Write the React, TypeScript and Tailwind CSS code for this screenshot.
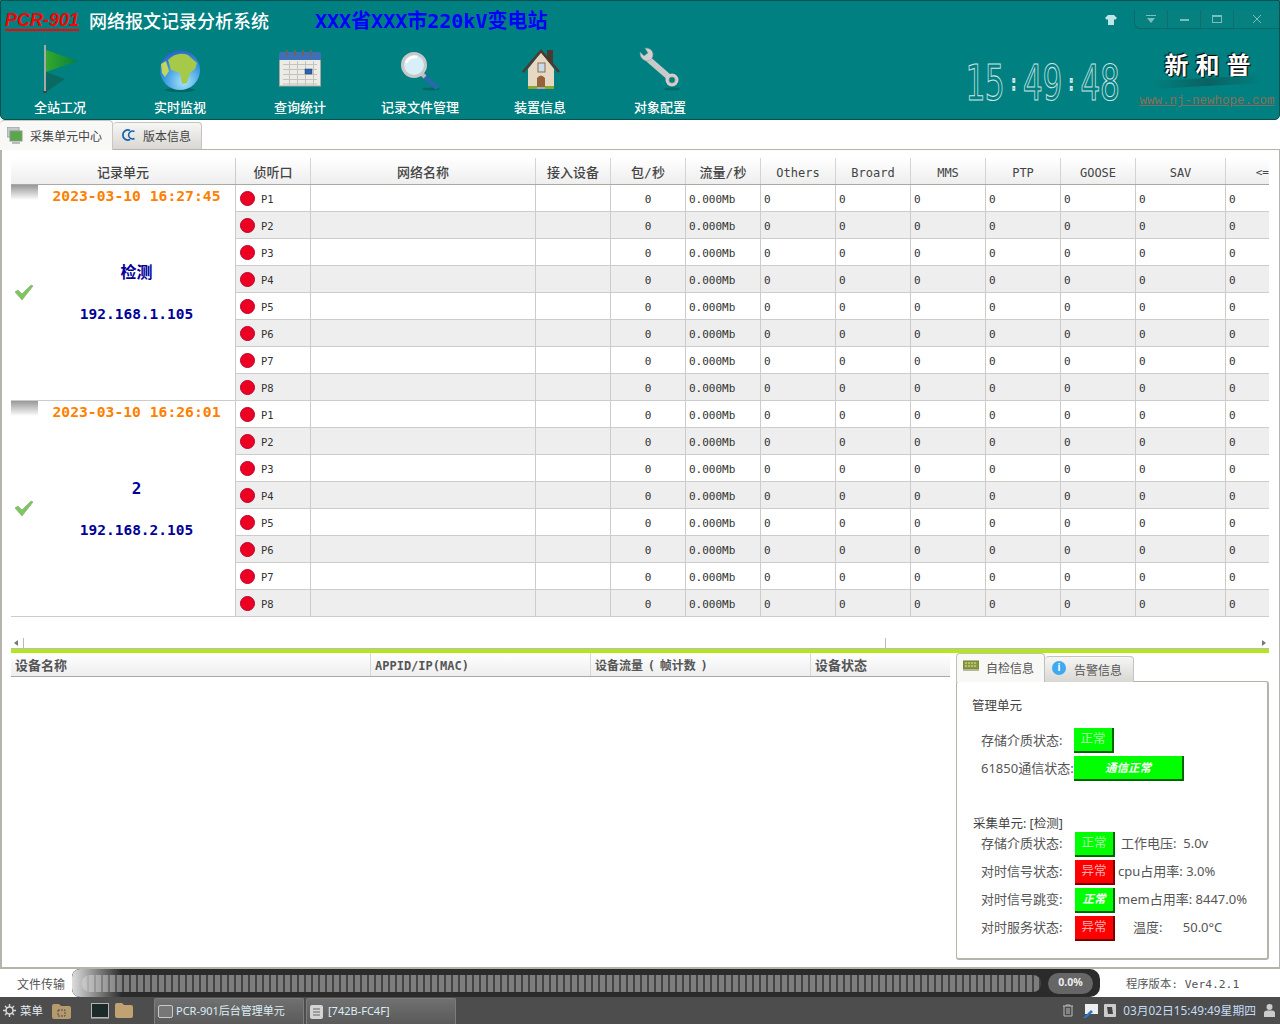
import React from 'react';

const sans = "font-['Noto_Sans','Noto_Sans_CJK_SC',sans-serif]";
const mono = "font-['DejaVu_Sans_Mono','Noto_Sans_CJK_SC',monospace]";

const columns = [
  { title: '侦听口', w: 'w-[75px]', size: 'text-[13px]' },
  { title: '网络名称', w: 'w-[225px]', size: 'text-[13px]' },
  { title: '接入设备', w: 'w-[75px]', size: 'text-[13px]' },
  { title: '包/秒', w: 'w-[75px]', size: 'text-[13px]' },
  { title: '流量/秒', w: 'w-[75px]', size: 'text-[13px]' },
  { title: 'Others', w: 'w-[75px]', size: 'text-[12px]' },
  { title: 'Broard', w: 'w-[75px]', size: 'text-[12px]' },
  { title: 'MMS', w: 'w-[75px]', size: 'text-[12px]' },
  { title: 'PTP', w: 'w-[75px]', size: 'text-[12px]' },
  { title: 'GOOSE', w: 'w-[75px]', size: 'text-[12px]' },
  { title: 'SAV', w: 'w-[90px]', size: 'text-[12px]' },
];

const ports = ['P1', 'P2', 'P3', 'P4', 'P5', 'P6', 'P7', 'P8'];

const units = [
  { time: '2023-03-10 16:27:45', name: '检测', ip: '192.168.1.105' },
  { time: '2023-03-10 16:26:01', name: '2', ip: '192.168.2.105' },
];

const toolbar = [
  { label: '全站工况', icon: <FlagIcon /> },
  { label: '实时监视', icon: <GlobeIcon /> },
  { label: '查询统计', icon: <CalendarIcon /> },
  { label: '记录文件管理', icon: <SearchIcon /> },
  { label: '装置信息', icon: <HouseIcon /> },
  { label: '对象配置', icon: <WrenchIcon /> },
];

function FlagIcon() {
  return (
    <svg width="50" height="52" viewBox="0 0 50 52">
      <defs>
        <linearGradient id="flag" x1="0" y1="0" x2="1" y2="0">
          <stop offset="0" stopColor="#35a82e" />
          <stop offset="1" stopColor="#07803a" />
        </linearGradient>
      </defs>
      <path d="M11 49 L30 36 L11 29 Z" fill="#0a6a62" />
      <path d="M11 7 L43 18 L11 29 Z" fill="url(#flag)" />
      <rect x="9" y="2" width="2" height="47" fill="#a8a8a8" />
      <rect x="8" y="48" width="4" height="2" fill="#444" />
    </svg>
  );
}

function GlobeIcon() {
  return (
    <svg width="50" height="52" viewBox="0 0 50 52">
      <defs>
        <radialGradient id="sea" cx="0.6" cy="0.8" r="0.8">
          <stop offset="0" stopColor="#a8e6fb" />
          <stop offset="0.6" stopColor="#3e9be2" />
          <stop offset="1" stopColor="#2368bd" />
        </radialGradient>
      </defs>
      <ellipse cx="25" cy="47" rx="15" ry="2" fill="#066" />
      <circle cx="25" cy="27" r="20" fill="url(#sea)" />
      <path d="M13 17 Q22 8 33 12 L42 20 L40 26 L35 30 L32 40 L27 41 L25 30 L16 27 Z" fill="#a7c94a" />
      <path d="M6 21 L11 18 L14 28 L10 34 L7 30 Z" fill="#c4d65a" />
    </svg>
  );
}

function CalendarIcon() {
  return (
    <svg width="50" height="52" viewBox="0 0 50 52">
      <rect x="4.5" y="12" width="41" height="31" fill="#ecebe6" stroke="#a8a8a0" />
      <path d="M4 17 V11 Q4 9 6 9 H44 Q46 9 46 11 V17 Z" fill="#3f6fb5" />
      <path d="M12 7V13M20 7V13M28 7V13M36 7V13" stroke="#666" strokeWidth="2" />
      <path d="M8 21.5H42M8 26.5H42M8 31.5H42M8 36.5H42M8 41H42M14.5 18V42M22.5 18V42M30.5 18V42M38.5 18V42" stroke="#c4c4bc" />
      <rect x="30" y="26" width="7" height="5" fill="#2d63ad" stroke="#1c3f77" strokeWidth="0.5" />
    </svg>
  );
}

function SearchIcon() {
  return (
    <svg width="50" height="52" viewBox="0 0 50 52">
      <ellipse cx="36" cy="46" rx="9" ry="1.5" fill="#066" />
      <path d="M28 32 L41 44" stroke="#2a68ae" strokeWidth="4.5" strokeLinecap="round" />
      <path d="M26 30 L30 34" stroke="#bbb" strokeWidth="4" />
      <circle cx="19" cy="22" r="11.5" fill="#d8eef9" stroke="#c8c8c8" strokeWidth="3" />
      <path d="M11 20 Q14 13 22 14" stroke="#fff" strokeWidth="2.5" fill="none" />
    </svg>
  );
}

function HouseIcon() {
  return (
    <svg width="50" height="52" viewBox="0 0 50 52">
      <rect x="32" y="7" width="6" height="14" fill="#4b3a30" />
      <path d="M13 26 L26 9 L39 26 V44 H13 Z" fill="#e7d8c4" />
      <path d="M8 29 L26 8 L44 29" fill="none" stroke="#4b3a30" strokeWidth="2.5" />
      <rect x="23" y="20" width="7" height="9" fill="#c8dcec" stroke="#8f6d50" />
      <path d="M22 45 V35 Q26 30 30 35 V45 Z" fill="#96623a" />
      <rect x="13" y="43" width="9" height="3" fill="#8ea52e" />
      <rect x="30" y="43" width="9" height="3" fill="#8ea52e" />
      <rect x="22" y="44" width="8" height="2" fill="#aaa" />
    </svg>
  );
}

function WrenchIcon() {
  return (
    <svg width="50" height="52" viewBox="0 0 50 52">
      <ellipse cx="37" cy="46" rx="8" ry="1.5" fill="#066" />
      <path d="M12 15 L35 35" stroke="#c9c9c9" strokeWidth="6" />
      <path d="M5 9 L9 13 L13 10 L10 5 Q17 5 18 11 Q18 17 12 18 Q5 17 5 9 Z" fill="#d0d0d0" stroke="#999" strokeWidth="0.5" />
      <circle cx="37" cy="37" r="6.5" fill="#cfcfcf" />
      <circle cx="37" cy="37" r="3" fill="#008080" stroke="#888" />
    </svg>
  );
}

function CheckIcon() {
  return (
    <svg width="20" height="17" viewBox="0 0 20 17">
      <path d="M1 8 L4 6 L8 10 L17 1 L19 2 L8 16 Z" fill="#7cc858" stroke="#8fa88a" strokeWidth="0.7" />
    </svg>
  );
}

function Dot() {
  return <span className="w-[15px] h-[15px] rounded-full bg-[#ee0022] border border-[#b8002a] shrink-0" />;
}

function Cell({ w, children, className }: { w: string; children?: React.ReactNode; className?: string }) {
  return <div className={`${w} shrink-0 h-full flex items-center border-r border-[#cccccc] ${className ?? ''}`}>{children}</div>;
}

function PortRow({ port, even }: { port: string; even: boolean }) {
  return (
    <div className={`h-[27px] flex border-b border-[#cccccc] text-[11px] text-[#333] ${mono} ${even ? 'bg-[#eeeeee]' : 'bg-white'}`}>
      <Cell w="w-[75px]" className="pl-[4px] gap-[6px]">
        <Dot />
        <span className="text-[10.5px] mt-[3px]">{port}</span>
      </Cell>
      <Cell w="w-[225px]" />
      <Cell w="w-[75px]" />
      <Cell w="w-[75px]" className="justify-center pt-[4px]">0</Cell>
      <Cell w="w-[75px]" className="pl-[3px] pt-[4px]">0.000Mb</Cell>
      <Cell w="w-[75px]" className="pl-[3px] pt-[4px]">0</Cell>
      <Cell w="w-[75px]" className="pl-[3px] pt-[4px]">0</Cell>
      <Cell w="w-[75px]" className="pl-[3px] pt-[4px]">0</Cell>
      <Cell w="w-[75px]" className="pl-[3px] pt-[4px]">0</Cell>
      <Cell w="w-[75px]" className="pl-[3px] pt-[4px]">0</Cell>
      <Cell w="w-[90px]" className="pl-[3px] pt-[4px]">0</Cell>
      <div className="flex-1 pl-[3px] pt-[4px] flex items-center">0</div>
    </div>
  );
}

function UnitBlock({ time, name, ip }: { time: string; name: string; ip: string }) {
  return (
    <div className="flex">
      <div className="w-[225px] shrink-0 h-[216px] flex border-r border-b border-[#cccccc] bg-white">
        <div className="w-[27px] shrink-0 flex flex-col">
          <div className="h-[15px] bg-gradient-to-b from-[#999999] to-white" />
          <div className="flex-1 flex items-center justify-center pb-[16px] pr-[2px]">
            <CheckIcon />
          </div>
        </div>
        <div className={`flex-1 flex flex-col items-center font-bold ${mono}`}>
          <div className="h-[22px] leading-[21px] text-[14.7px] text-[#ff8000] whitespace-nowrap">{time}</div>
          <div className="mt-[56px] h-[20px] leading-[20px] text-[16px] text-[#000099]">{name}</div>
          <div className="mt-[21px] h-[20px] leading-[20px] text-[14.5px] text-[#000099]">{ip}</div>
        </div>
      </div>
      <div className="flex-1 min-w-0">
        {ports.map((port, i) => (
          <PortRow key={port} port={port} even={i % 2 === 1} />
        ))}
      </div>
    </div>
  );
}

function Clock() {
  return (
    <div className="w-[155px] h-[38px] flex items-center justify-between text-[33px] leading-none text-transparent [-webkit-text-stroke:0.7px_#d0e4e4] font-['DejaVu_Sans_Mono',monospace] scale-y-150">
      <span>15</span>
      <span className="text-[14px] [-webkit-text-stroke:1px_#e8f0f0]">:</span>
      <span>49</span>
      <span className="text-[14px] [-webkit-text-stroke:1px_#e8f0f0]">:</span>
      <span>48</span>
    </div>
  );
}

function WindowControls() {
  return (
    <div className="w-[145px] h-[19px] flex border border-r-0 border-t-0 border-[#0a6a6a] rounded-bl-[6px] bg-[#078080]">
      <div className="w-[33px] flex items-center justify-center border-r border-[#0f6e6e]">
        <svg width="10" height="8" viewBox="0 0 10 8"><path d="M0 0H10V1H0ZM1 3H9L5 8Z" fill="#7fbdbd" /></svg>
      </div>
      <div className="w-[33px] flex items-center justify-center border-r border-[#0f6e6e]">
        <span className="w-[9px] h-[2px] mt-[2px] bg-[#7fbdbd]" />
      </div>
      <div className="w-[33px] flex items-center justify-center border-r border-[#0f6e6e]">
        <span className="w-[10px] h-[8px] border border-t-2 border-[#7fbdbd]" />
      </div>
      <div className="flex-1 flex items-center justify-center">
        <svg width="10" height="10" viewBox="0 0 10 10"><path d="M1 1L9 9M9 1L1 9" stroke="#7fbdbd" /></svg>
      </div>
    </div>
  );
}

function Header() {
  return (
    <div className={`h-[120px] shrink-0 bg-[#008080] border border-[#0d4f4f] rounded-b-[5px] flex justify-between ${sans}`}>
      <div className="flex flex-col">
        <div className="h-[39px] flex items-center pl-[4px]">
          <span className="w-[84px] text-[18px] font-bold italic text-[#ff0000] font-['Liberation_Sans',sans-serif]">
            <span className="underline decoration-2 underline-offset-[3px]">PCR-901</span>
          </span>
          <span className="w-[226px] text-[18px] font-medium text-white font-['Noto_Sans_CJK_SC',sans-serif]">网络报文记录分析系统</span>
          <span className={`text-[20px] font-bold text-[#0000ff] ${mono}`}>XXX省XXX市220kV变电站</span>
        </div>
        <div className="flex -ml-[1px]">
          {toolbar.map((item) => (
            <div key={item.label} className="w-[120px] flex flex-col items-center">
              <div className="h-[52px] mt-[3px] flex items-center justify-center">{item.icon}</div>
              <span className="text-[13px] leading-[16px] mt-[4px] text-white font-medium font-['Noto_Sans_CJK_SC',sans-serif]">{item.label}</span>
            </div>
          ))}
        </div>
      </div>
      <div className="flex flex-col items-end">
        <div className="flex items-center mt-[9px]">
          <svg width="12" height="10" viewBox="0 0 12 10" className="mr-[17px]">
            <path d="M3 0H9L12 3L10 5L9 4V10H3V4L2 5L0 3Z" fill="#bfe6e6" />
          </svg>
          <WindowControls />
        </div>
        <div className="flex mt-[21px] items-start">
          <div className="mr-[17px] mt-[13px]">
            <Clock />
          </div>
          <div className="w-[140px] mr-[2px] flex flex-col items-center">
            <div className="text-[24px] leading-[28px] font-bold text-white tracking-[7px] pl-[8px] font-['Noto_Sans_CJK_SC',serif] [text-shadow:1px_1px_1px_#000,-1px_-1px_1px_#000]">
              新和普
            </div>
            <div className="h-[8px] w-[110px] bg-gradient-to-r from-[#008080] via-[#0a6262] to-[#008080] -skew-y-3" />
            <div className="mt-[7px] text-[12.5px] leading-[16px] whitespace-nowrap text-[#8a6f58] underline decoration-[#8a6a5c] font-['Liberation_Mono',monospace]">
              www.nj-newhope.com
            </div>
          </div>
        </div>
      </div>
    </div>
  );
}

function TopTabs() {
  return (
    <div className="h-[30px] shrink-0 flex items-end border-b border-[#b5b3ab] text-[12px] text-[#444] font-['Noto_Sans_CJK_SC',sans-serif]">
      <div className="w-[113px] h-[30px] flex items-center gap-[7px] pl-[7px] bg-[#f8f8f6] border-r border-t border-[#c8c8c0] rounded-t-[4px] relative top-[1px]">
        <svg width="16" height="18" viewBox="0 0 16 18">
          <rect x="0" y="0" width="12" height="10" fill="#c5c9cc" stroke="#9aa0a5" />
          <rect x="3" y="4" width="12" height="10" fill="#5aa64a" stroke="#8a9a8a" />
          <rect x="5" y="15" width="8" height="2" fill="#bbb" />
        </svg>
        <span>采集单元中心</span>
      </div>
      <div className="w-[89px] h-[27px] flex items-center gap-[7px] pl-[8px] bg-gradient-to-b from-[#f6f6f5] to-[#d8d7d3] border-r border-t border-[#c4c4bc] rounded-t-[4px]">
        <svg width="15" height="14" viewBox="0 0 15 14" className="mb-[3px]">
          <path d="M9 2.5A5 5 0 1 0 9 11.5" fill="none" stroke="#1a62a8" strokeWidth="1.8" />
          <path d="M13.5 3.5A4 4 0 1 0 13.5 10.5" fill="none" stroke="#1a62a8" strokeWidth="1.5" />
        </svg>
        <span>版本信息</span>
      </div>
    </div>
  );
}

function MainTable() {
  return (
    <div className="mt-[8px]">
      <div className={`h-[27px] flex bg-gradient-to-b from-white to-[#eeeeee] border-b border-[#aaaaa4] font-medium text-[#444] ${mono}`}>
        <div className="w-[225px] shrink-0 flex items-center justify-center pt-[4px] text-[13px] border-r border-[#cccccc]">记录单元</div>
        {columns.map((col) => (
          <div key={col.title} className={`${col.w} ${col.size} shrink-0 flex items-center justify-center pt-[4px] border-r border-[#d4d4d4]`}>
            {col.title}
          </div>
        ))}
        <div className="flex-1 flex items-center justify-end pt-[4px] text-[11px]">{'<='}</div>
      </div>
      {units.map((u) => (
        <UnitBlock key={u.time} {...u} />
      ))}
    </div>
  );
}

function HScroll() {
  return (
    <div className="mt-[21px] h-[11px] flex items-center justify-between border-b border-[#bbbbbb]">
      <div className="flex items-center h-full">
        <svg width="12" height="10" viewBox="0 0 12 10">
          <path d="M3 5L7 2V8Z" fill="#777" />
        </svg>
        <span className="w-[1px] h-full bg-[#bbbbbb]" />
      </div>
      <span className="w-[1px] h-full bg-[#bbbbbb] ml-[488px]" />
      <svg width="10" height="10" viewBox="0 0 10 10">
        <path d="M7 5L3 2V8Z" fill="#777" />
      </svg>
    </div>
  );
}

function DeviceTable() {
  const cols = [
    { t: '设备名称', w: 'w-[360px]', size: 'text-[13px]' },
    { t: 'APPID/IP(MAC)', w: 'w-[220px]', size: 'text-[12px]' },
    { t: '设备流量 ( 帧计数 )', w: 'w-[220px]', size: 'text-[12px] [word-spacing:-2.5px]' },
    { t: '设备状态', w: 'w-[139px]', size: 'text-[13px]' },
  ];
  return (
    <div className={`w-[939px] h-[24px] flex bg-gradient-to-b from-white to-[#eeeeee] border-b border-[#aaaaa4] font-bold text-[#555] ${mono}`}>
      {cols.map((c) => (
        <div key={c.t} className={`${c.w} ${c.size} flex items-center pl-[4px] pt-[3px] border-r border-[#d8d8d8] last:border-r-0`}>
          {c.t}
        </div>
      ))}
    </div>
  );
}

function StatusButton({ text, red, bold, w = 'w-[40px]' }: { text: string; red?: boolean; bold?: boolean; w?: string }) {
  const tone = red ? 'bg-[#ff0000] border-[#7a0000] text-[#ffb0b0]' : bold ? 'bg-[#00ff00] border-[#006600] text-white' : 'bg-[#00ff00] border-[#006600] text-[#a8ffa8]';
  return (
    <div
      className={`${w} h-[25px] shrink-0 flex items-center justify-center border-r-2 border-b-2 ${tone} ${bold ? 'font-bold italic text-[11.5px]' : 'text-[12.5px]'}`}
    >
      {text}
    </div>
  );
}

function StatusRow({ label, state, red, bold, note }: { label: string; state: string; red?: boolean; bold?: boolean; note: React.ReactNode }) {
  return (
    <div className="h-[28px] flex items-center pl-[24px]">
      <span className="w-[94px]">{label}</span>
      <StatusButton text={state} red={red} bold={bold} />
      {note}
    </div>
  );
}

function SidePanel() {
  return (
    <div className={`w-[313px] shrink-0 flex flex-col text-[13px] text-[#555] ${sans}`}>
      <div className="h-[28px] flex items-end relative top-[1px] z-10">
        <div className="w-[89px] h-[29px] flex items-center gap-[7px] pl-[6px] bg-[#f8f8f6] border border-b-0 border-[#c0c0b8] rounded-t-[4px]">
          <svg width="16" height="12" viewBox="0 0 16 12" className="mb-[4px]">
            <rect x="0" y="1" width="16" height="8" fill="#8a9a3a" stroke="#6f7f30" />
            <path d="M2 3H14M2 6H14" stroke="#dfe5a8" strokeDasharray="2 1" />
            <rect x="0" y="9" width="16" height="2" fill="#b7b7a0" />
          </svg>
          <span className="font-['Noto_Sans_CJK_SC',sans-serif] text-[12px]">自检信息</span>
        </div>
        <div className="w-[89px] h-[26px] flex items-center gap-[8px] pl-[7px] bg-gradient-to-b from-[#f6f6f5] to-[#d8d7d3] border-r border-t border-[#c4c4bc] rounded-t-[4px]">
          <span className="w-[14px] h-[14px] rounded-full bg-[#3fa9f0] text-white text-[10px] font-bold flex items-center justify-center mb-[4px]">i</span>
          <span className="font-['Noto_Sans_CJK_SC',sans-serif] text-[12px]">告警信息</span>
        </div>
      </div>
      <div className="h-[279px] border border-[#b5b3ab] rounded-[3px] bg-white border-b-2 border-r-2 pl-[15px] pt-[14px] flex flex-col">
        <div className="h-[20px] leading-[20px] text-[12.5px] text-[#444]">管理单元</div>
        <div className="mt-[12px] -ml-[15px] flex flex-col gap-[3px]">
          <div className="h-[25px] flex items-center pl-[24px]">
            <span className="w-[93px]">存储介质状态:</span>
            <StatusButton text="正常" />
          </div>
          <div className="h-[25px] flex items-center pl-[24px]">
            <span className="w-[93px] whitespace-nowrap">61850通信状态:</span>
            <StatusButton text="通信正常" bold w="w-[110px]" />
          </div>
        </div>
        <div className="mt-[33px] h-[20px] leading-[20px] text-[12.5px] text-[#444] pl-[1px]">采集单元: [检测]</div>
        <div className="-ml-[15px] mt-[-4px]">
          <StatusRow label="存储介质状态:" state="正常" note={<span className="ml-[6px]">工作电压:&nbsp;&nbsp;5.0v</span>} />
          <StatusRow label="对时信号状态:" state="异常" red note={<span className="ml-[3px]">cpu占用率: 3.0%</span>} />
          <StatusRow label="对时信号跳变:" state="正常" bold note={<span className="ml-[3px]">mem占用率: 8447.0%</span>} />
          <StatusRow label="对时服务状态:" state="异常" red note={<span className="ml-[18px]">温度:&nbsp;&nbsp;&nbsp;&nbsp;&nbsp;&nbsp;50.0°C</span>} />
        </div>
      </div>
    </div>
  );
}

function TransferBar() {
  return (
    <div className={`h-[28px] shrink-0 flex items-center text-[12px] text-[#555] ${sans}`}>
      <span className="w-[72px] pl-[17px] pt-[2px] font-['Noto_Sans_CJK_SC',sans-serif]">文件传输</span>
      <div className="w-[1028px] h-full bg-[#2b2b2b] rounded-l-[8px] rounded-r-[10px] flex items-center relative overflow-hidden">
        <div className="ml-[10px] w-[959px] h-[17px] rounded-[8px] bg-[repeating-linear-gradient(90deg,#7d7d7d_0px,#7d7d7d_5px,#444444_5px,#444444_7px)]" />
        <div className="absolute left-0 top-0 w-[50px] h-full bg-gradient-to-r from-[#dddddd] to-transparent rounded-l-[8px]" />
        <div className="ml-[7px] w-[45px] h-[21px] rounded-full bg-[#666666] text-[#eeeeee] text-[10.5px] font-bold flex items-center justify-center">0.0%</div>
      </div>
      <span className={`ml-[26px] pt-[4px] text-[11.3px] text-[#555] ${mono}`}>程序版本: Ver4.2.1</span>
    </div>
  );
}

function TaskButton({ icon, label, w }: { icon: React.ReactNode; label: string; w: string }) {
  return (
    <div className={`${w} h-[26px] flex items-center gap-[3px] pl-[3px] bg-gradient-to-b from-[#707070] to-[#5a5a5a] border border-[#7c7c7c] border-b-0 rounded-t-[2px] text-[#dceef5] text-[11px]`}>
      {icon}
      <span>{label}</span>
    </div>
  );
}

function Taskbar() {
  return (
    <div className={`h-[27px] shrink-0 bg-[#4d4d4d] flex items-end justify-between text-[11.5px] text-[#e4eef4] ${sans}`}>
      <div className="flex items-end h-full">
        <div className="h-full flex items-center pl-[3px] gap-[4px] w-[52px]">
          <svg width="13" height="13" viewBox="0 0 13 13">
            <circle cx="6.5" cy="6.5" r="3.5" fill="none" stroke="#d8d8d8" strokeWidth="1.6" />
            <path d="M6.5 0V3M6.5 10V13M0 6.5H3M10 6.5H13M2 2L4 4M9 9L11 11M11 2L9 4M4 9L2 11" stroke="#d8d8d8" strokeWidth="1.4" />
          </svg>
          <span>菜单</span>
        </div>
        <div className="h-full flex items-center w-[38px]">
          <svg width="19" height="16" viewBox="0 0 19 16">
            <path d="M0 3Q0 1 2 1H7L9 3H17Q19 3 19 5V14Q19 16 17 16H2Q0 16 0 14Z" fill="#b59a6e" />
            <rect x="6" y="7" width="7" height="6" fill="none" stroke="#4d4d4d" strokeDasharray="2 1" />
          </svg>
        </div>
        <div className="h-full flex items-center gap-[6px] ml-[1px] w-[63px]">
          <span className="w-[18px] h-[15px] bg-[#1d2a2a] border border-[#b4b4b4] shadow-[0_1px_0_#888]" />
          <svg width="18" height="15" viewBox="0 0 18 15">
            <path d="M0 2Q0 0 2 0H7L9 2H16Q18 2 18 4V13Q18 15 16 15H2Q0 15 0 13Z" fill="#c0a273" />
          </svg>
        </div>
        <div className="flex items-end gap-[2px] h-full">
          <TaskButton
            w="w-[150px]"
            label="PCR-901后台管理单元"
            icon={<span className="w-[15px] h-[13px] border border-[#c8c8c8] rounded-[2px] bg-[#777]" />}
          />
          <TaskButton
            w="w-[150px]"
            label="[742B-FC4F]"
            icon={
              <svg width="13" height="14" viewBox="0 0 13 14" className="mr-[2px]">
                <rect width="13" height="14" rx="2" fill="#d4d4d4" />
                <path d="M3 4H10M3 7H10M3 10H10" stroke="#666" />
              </svg>
            }
          />
        </div>
      </div>
      <div className="flex items-center h-full">
        <svg width="12" height="13" viewBox="0 0 12 13" className="mr-[9px]">
          <path d="M1 2H11M4 2V1H8V2M2 2V12H10V2M5 4V10M7 4V10" fill="none" stroke="#bbbbbb" />
        </svg>
        <svg width="15" height="14" viewBox="0 0 15 14" className="mr-[6px]">
          <rect x="2" y="0" width="13" height="10" fill="#eeeeee" />
          <path d="M0 14L8 6L10 8L3 14Z" fill="#2a78c8" />
        </svg>
        <svg width="12" height="13" viewBox="0 0 12 13" className="mr-[7px]">
          <rect width="12" height="13" rx="1" fill="#cccccc" />
          <path d="M3 3H8L9 10H4Z" fill="#444" />
        </svg>
        <span className="text-[11.8px] text-[#c4dcf4] whitespace-nowrap">03月02日15:49:49星期四</span>
        <svg width="11" height="13" viewBox="0 0 11 13" className="ml-[8px] mr-[5px]">
          <circle cx="5.5" cy="3" r="3" fill="#cccccc" />
          <path d="M0 13V9Q0 6.5 3 6.5H8Q11 6.5 11 9V13Z" fill="#cccccc" />
        </svg>
      </div>
    </div>
  );
}

export default function App() {
  return (
    <div className="w-[1280px] h-[1024px] flex flex-col bg-white overflow-hidden">
      <Header />
      <TopTabs />
      <div className="flex-1 min-h-0 flex flex-col border-l-2 border-r border-b-2 border-[#b5b3ab] pl-[9px] pr-[10px]">
        <MainTable />
        <HScroll />
        <div className="h-[4px] bg-[#b5e61d]" />
        <div className="flex flex-1 min-h-0 gap-[6px]">
          <DeviceTable />
          <SidePanel />
        </div>
      </div>
      <TransferBar />
      <Taskbar />
    </div>
  );
}
